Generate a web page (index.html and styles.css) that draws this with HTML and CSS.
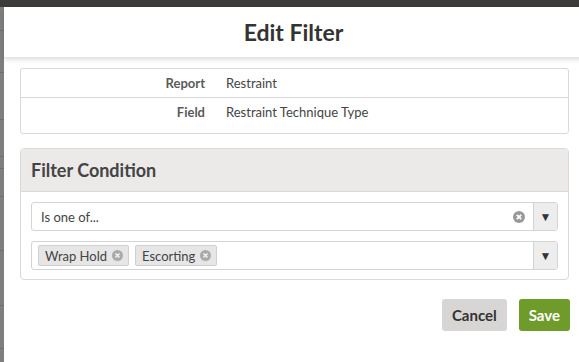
FILE: index.html
```html
<!DOCTYPE html>
<html lang="en">
<head>
    <meta charset="UTF-8">
    <title>Edit Filter</title>
    <link rel="stylesheet" href="styles.css">
</head>
<body>
    <div class="topbar"></div>
    <div class="stage">
        <div class="backdrop">
            <div class="bg-row" style="height: 23px"></div>
            <div class="bg-row" style="height: 41px"></div>
            <div class="bg-row" style="height: 46px"></div>
            <div class="bg-row" style="height: 36px"></div>
            <div class="bg-row" style="height: 11px"></div>
            <div class="bg-row" style="height: 27px"></div>
            <div class="bg-row" style="height: 53px"></div>
            <div class="bg-row" style="height: 54px"></div>
            <div class="bg-row" style="height: 42px"></div>
        </div>

        <div class="modal">
            <div class="modal-header">
                <h1>Edit Filter</h1>
            </div>

            <div class="modal-body">
                <div class="info-box">
                    <div class="info-row">
                        <span class="info-label">Report</span>
                        <span class="info-value">Restraint</span>
                    </div>
                    <div class="info-row last">
                        <span class="info-label">Field</span>
                        <span class="info-value">Restraint Technique Type</span>
                    </div>
                </div>

                <div class="panel">
                    <div class="panel-heading">Filter Condition</div>
                    <div class="panel-body">
                        <div class="select">
                            <div class="select-value">Is one of...</div>
                            <span class="clear-icon">
                                <svg width="12" height="12" viewBox="0 0 12 12"><circle cx="6" cy="6" r="6" fill="#999"/><path d="M3.8 3.8 8.2 8.2M8.2 3.8 3.8 8.2" stroke="#fff" stroke-width="1.8"/></svg>
                            </span>
                            <div class="select-arrow">&#9660;</div>
                        </div>
                        <div class="select">
                            <div class="select-value tags">
                                <span class="tag">Wrap Hold
                                    <svg width="11" height="11" viewBox="0 0 12 12"><circle cx="6" cy="6" r="6" fill="#aaa"/><path d="M3.8 3.8 8.2 8.2M8.2 3.8 3.8 8.2" stroke="#eee" stroke-width="1.8"/></svg>
                                </span>
                                <span class="tag">Escorting
                                    <svg width="11" height="11" viewBox="0 0 12 12"><circle cx="6" cy="6" r="6" fill="#aaa"/><path d="M3.8 3.8 8.2 8.2M8.2 3.8 3.8 8.2" stroke="#eee" stroke-width="1.8"/></svg>
                                </span>
                            </div>
                            <div class="select-arrow">&#9660;</div>
                        </div>
                    </div>
                </div>

                <div class="modal-footer">
                    <button class="btn btn-cancel">Cancel</button>
                    <button class="btn btn-save">Save</button>
                </div>
            </div>
        </div>
    </div>
</body>
</html>
```

FILE: styles.css
```css
body {
    margin: 0;
    padding: 0;
    background: #7f7e7c;
    font-family: Lato, "Open Sans", sans-serif;
    color: #444;
    overflow: hidden;
}

.topbar {
    height: 7px;
    background: #3c3b39;
}

.stage {
    display: flex;
}

.backdrop {
    width: 4px;
    flex-shrink: 0;
}

.bg-row {
    border-bottom: 1px solid #6f6e6c;
}

.modal {
    width: 579px;
    flex-shrink: 0;
    height: 355px;
    background: #fff;
}

.modal-header {
    height: 50px;
    display: flex;
    align-items: center;
    justify-content: center;
    box-shadow: 0 2px 4px rgba(0, 0, 0, 0.12);
    border-bottom: 1px solid #e4e4e4;
}

.modal-header h1 {
    margin: 0;
    font-size: 23px;
    font-weight: bold;
    color: #333;
}

.modal-body {
    padding: 10px 14px 0 16px;
}

.info-box {
    border: 1px solid #d9d9d9;
    border-radius: 3px;
}

.info-row {
    display: flex;
    align-items: center;
    height: 28px;
    font-size: 13px;
    border-bottom: 1px solid #d9d9d9;
}

.info-row.last {
    border-bottom: none;
    height: 35px;
    align-items: flex-start;
    padding-top: 6px;
    box-sizing: border-box;
}

.info-label {
    width: 184px;
    text-align: right;
    font-weight: bold;
    color: #5a5a5a;
}

.info-value {
    margin-left: 21px;
    color: #444;
}

.panel {
    margin-top: 14px;
    border: 1px solid #d9d9d9;
    border-radius: 4px;
}

.panel-heading {
    height: 42px;
    display: flex;
    align-items: center;
    padding-left: 10px;
    background: #ebeae8;
    border-bottom: 1px solid #d9d9d9;
    border-radius: 4px 4px 0 0;
    font-size: 18px;
    font-weight: bold;
    color: #444;
}

.panel-body {
    padding: 10px 10px 9px 10px;
    display: flex;
    flex-direction: column;
    gap: 10px;
}

.select {
    display: flex;
    align-items: center;
    height: 27px;
    border: 1px solid #d4d4d4;
    border-radius: 3px;
    font-size: 13px;
}

.select-value {
    flex: 1;
    padding-left: 9px;
}

.clear-icon {
    display: flex;
    margin-right: 8px;
}

.select-arrow {
    width: 23px;
    height: 100%;
    display: flex;
    align-items: center;
    justify-content: center;
    background: #ededed;
    border-left: 1px solid #d4d4d4;
    font-size: 12px;
    color: #333;
}

.tags {
    display: flex;
    gap: 6px;
    padding-left: 6px;
}

.tag {
    display: flex;
    align-items: center;
    gap: 5px;
    height: 19px;
    padding: 0 5px 0 6px;
    background: #e6e6e6;
    border: 1px solid #d0d0d0;
    border-radius: 2px;
}

.modal-footer {
    display: flex;
    justify-content: flex-end;
    gap: 12px;
    margin-top: 19px;
    margin-right: -1px;
}

.btn {
    height: 32px;
    border: none;
    border-radius: 3px;
    font-family: Lato, "Open Sans", sans-serif;
    font-size: 15px;
    font-weight: bold;
    padding: 0 10px;
}

.btn-cancel {
    background: #d7d6d4;
    color: #333;
}

.btn-save {
    background: #6f9b2a;
    color: #fff;
}
```
